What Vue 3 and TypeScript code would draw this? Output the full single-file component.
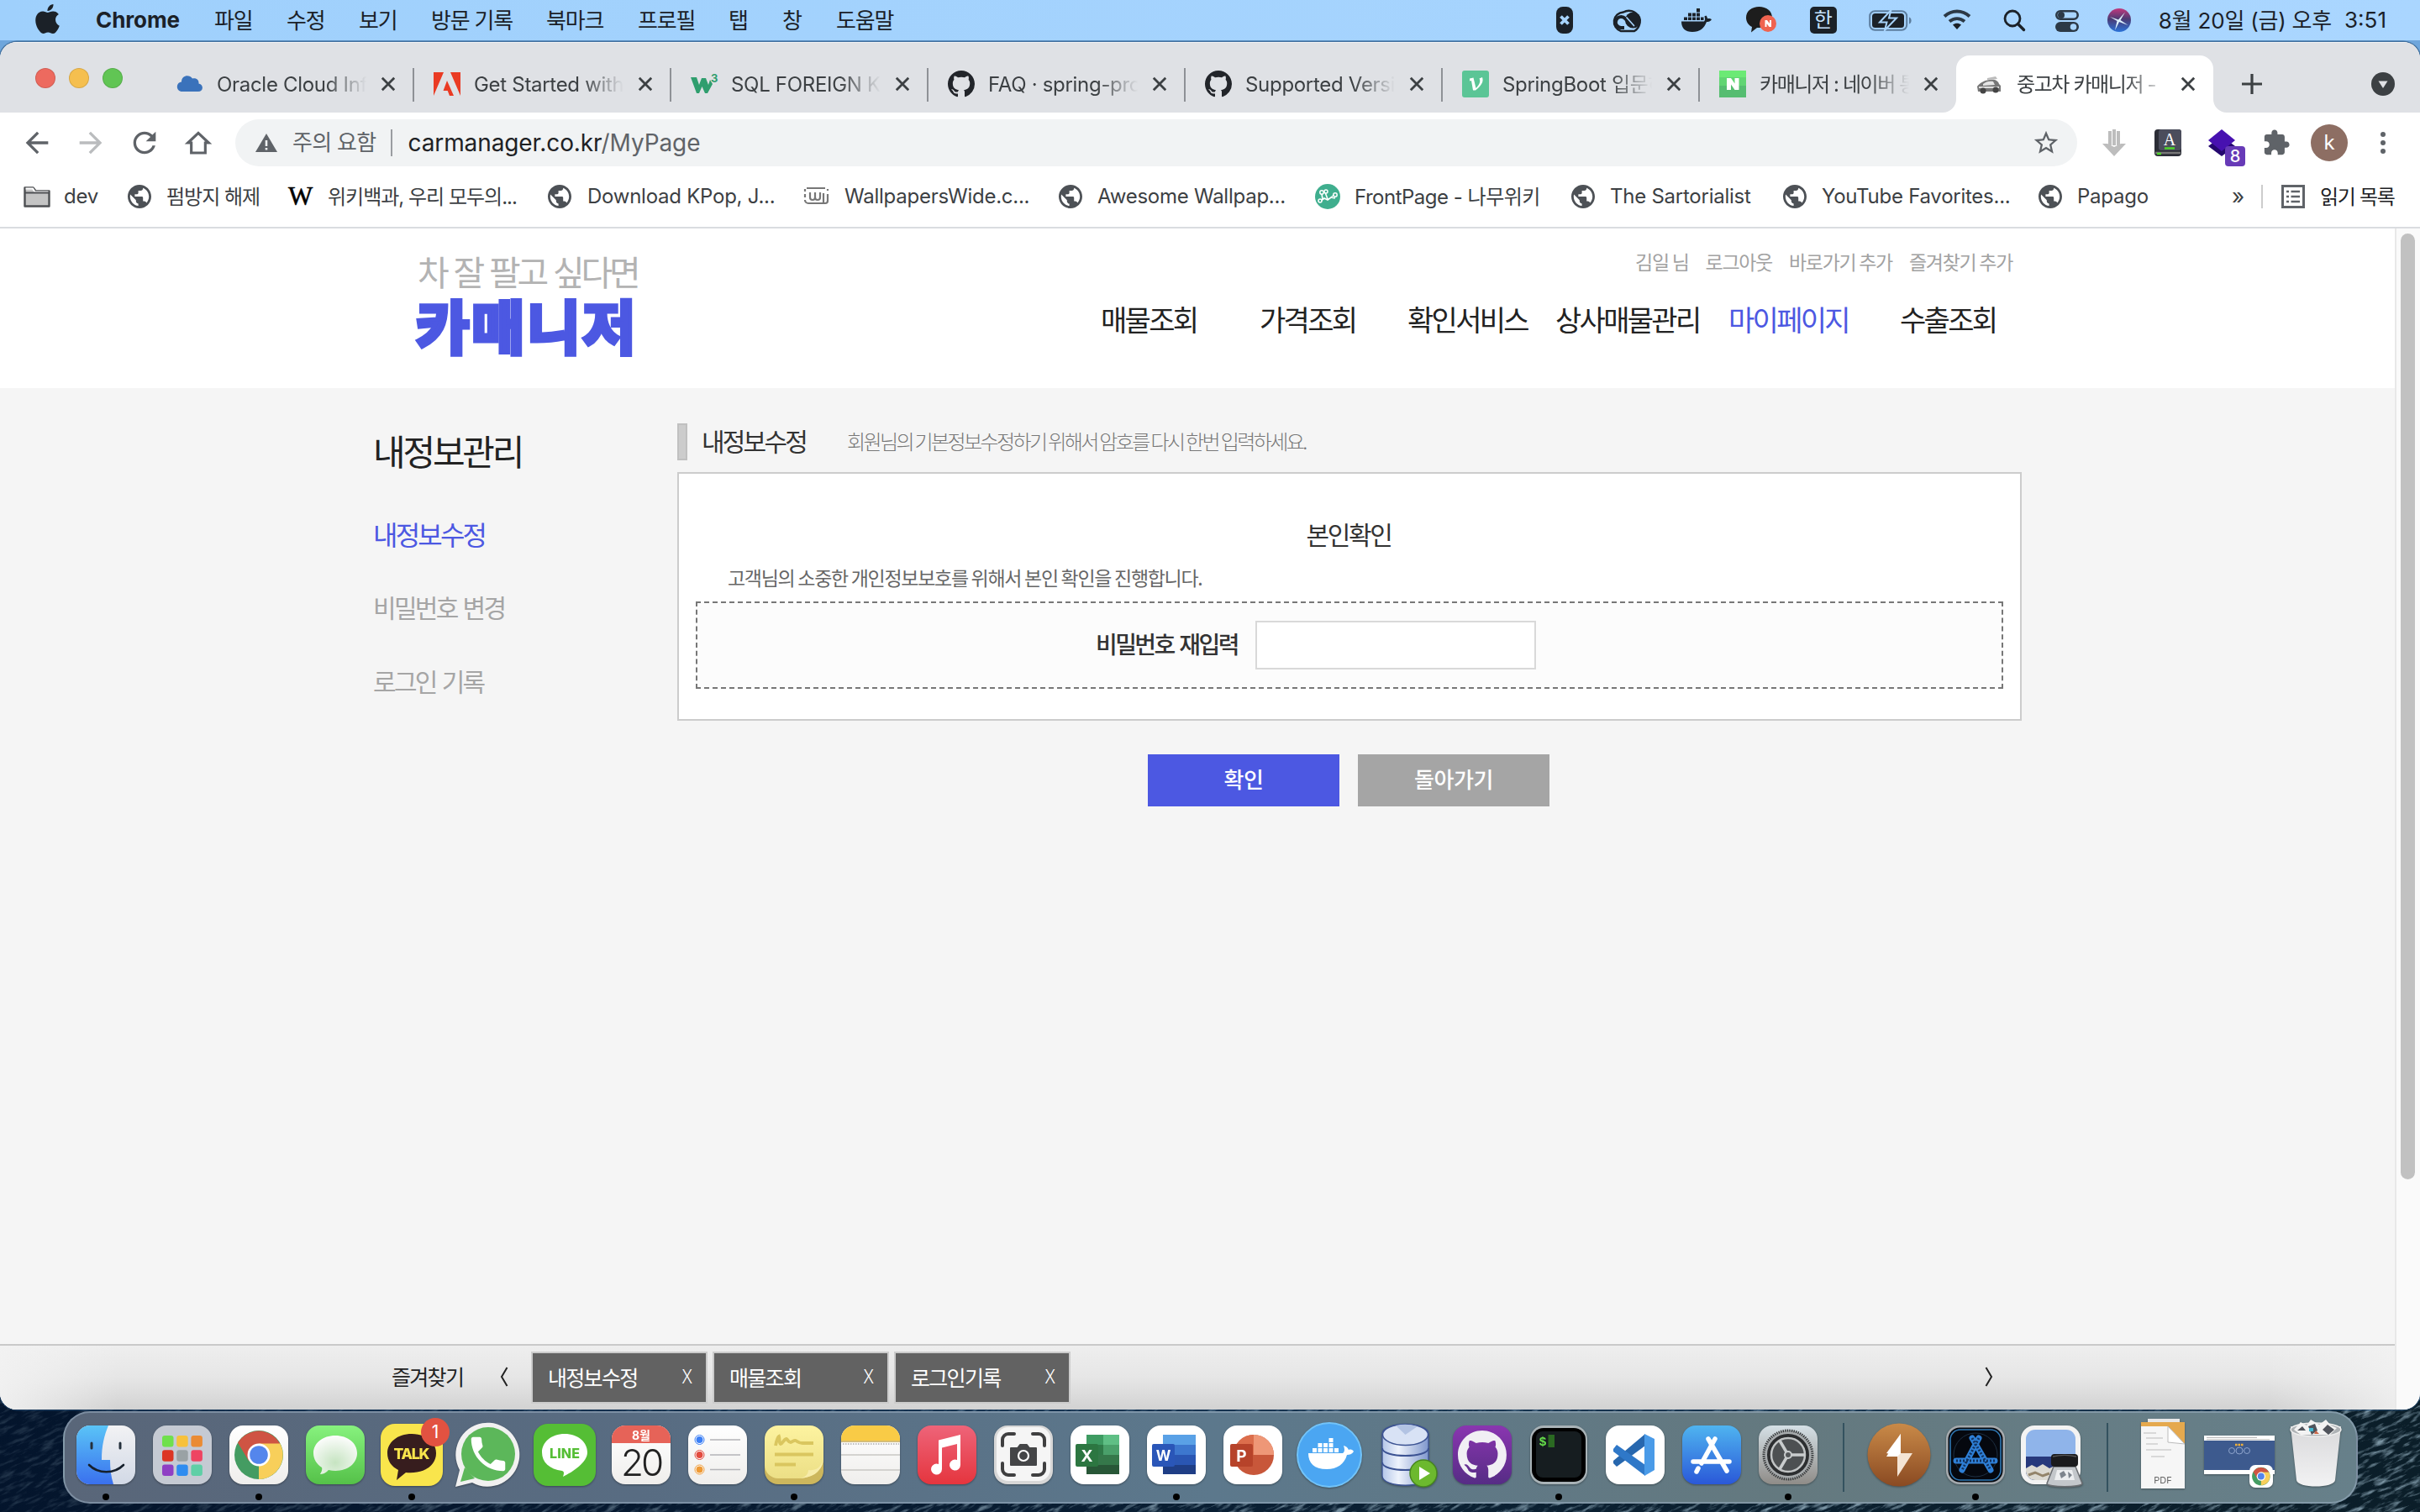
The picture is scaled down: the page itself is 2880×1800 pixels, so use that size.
<script setup lang="ts">
interface Item { label: string; width: number }
interface Tab { title: string; icon: string; active?: boolean }
interface Bookmark { label: string; icon: string; width: number; gap: number }

const menus: Item[] = [
  { label: '파일', width: 86 },
  { label: '수정', width: 86 },
  { label: '보기', width: 86 },
  { label: '방문 기록', width: 137 },
  { label: '북마크', width: 109 },
  { label: '프로필', width: 108 },
  { label: '탭', width: 64 },
  { label: '창', width: 64 },
  { label: '도움말', width: 90 },
]

const tabs: Tab[] = [
  { title: 'Oracle Cloud Infra', icon: 'cloud' },
  { title: 'Get Started with A', icon: 'adobe' },
  { title: 'SQL FOREIGN KEY', icon: 'w3' },
  { title: 'FAQ · spring-project', icon: 'github' },
  { title: 'Supported Versions', icon: 'github' },
  { title: 'SpringBoot 입문하기', icon: 'velog' },
  { title: '카매니저 : 네이버 통합', icon: 'naver' },
  { title: '중고차 카매니저 - ', icon: 'car', active: true },
]

const bookmarks: Bookmark[] = [
  { label: 'dev', icon: 'folder', width: 124, gap: 48 },
  { label: '펌방지 해제', icon: 'globe', width: 191, gap: 46 },
  { label: '위키백과, 우리 모두의...', icon: 'wiki', width: 309, gap: 47 },
  { label: 'Download KPop, J...', icon: 'globe', width: 304, gap: 47 },
  { label: 'WallpapersWide.c...', icon: 'ww', width: 304, gap: 49 },
  { label: 'Awesome Wallpap...', icon: 'globe', width: 305, gap: 46 },
  { label: 'FrontPage - 나무위키', icon: 'namu', width: 305, gap: 47 },
  { label: 'The Sartorialist', icon: 'globe', width: 252, gap: 46 },
  { label: 'YouTube Favorites...', icon: 'globe', width: 304, gap: 46 },
  { label: 'Papago', icon: 'globe', width: 180, gap: 46 },
]

const siteNav: Item[] = [
  { label: '매물조회', width: 189 },
  { label: '가격조회', width: 176 },
  { label: '확인서비스', width: 176 },
  { label: '상사매물관리', width: 206 },
  { label: '마이페이지', width: 204 },
  { label: '수출조회', width: 116 },
]

const dock: string[] = [
  'finder', 'launchpad', 'chrome', 'messages', 'talk', 'whatsapp', 'line', 'calendar', 'reminders',
  'stickies', 'notes', 'music', 'capture', 'excel', 'word', 'ppt', 'docker', 'db', 'github',
  'terminal', 'vscode', 'appstore', 'prefs', 'sep', 'bolt', 'sim', 'preview', 'sep', 'pdf', 'shot', 'trash',
]
const running = new Set(['finder', 'chrome', 'talk', 'stickies', 'word', 'terminal', 'prefs', 'sim'])
const favorites: string[] = ['내정보수정', '매물조회', '로그인기록']

const startsKorean = (s: string): boolean => /^[가-힣]/.test(s)
const hasKorean = (s: string): boolean => /[가-힣]/.test(s)

const launchColors = ['#6fe04c', '#f7c13c', '#ea8b34', '#dc3524', '#9aa2a5', '#ee4462', '#8f3fc4', '#2f8cf0', '#5fcfa6']
const githubPath = 'M8 0C3.58 0 0 3.58 0 8c0 3.54 2.29 6.53 5.47 7.59.4.07.55-.17.55-.38 0-.19-.01-.82-.01-1.49-2.01.37-2.53-.49-2.69-.94-.09-.23-.48-.94-.82-1.13-.28-.15-.68-.52-.01-.53.63-.01 1.08.58 1.23.82.72 1.21 1.87.87 2.33.66.07-.52.28-.87.51-1.07-1.78-.2-3.64-.89-3.64-3.95 0-.87.31-1.59.82-2.15-.08-.2-.36-1.02.08-2.12 0 0 .67-.21 2.2.82.64-.18 1.32-.27 2-.27.68 0 1.36.09 2 .27 1.53-1.04 2.2-.82 2.2-.82.44 1.1.16 1.92.08 2.12.51.56.82 1.27.82 2.15 0 3.07-1.87 3.75-3.65 3.95.29.25.54.73.54 1.48 0 1.07-.01 1.93-.01 2.2 0 .21.15.46.55.38A8.013 8.013 0 0016 8c0-4.42-3.58-8-8-8z'
</script>

<template>
  <div class="desktop">
    <svg class="wallpaper" width="2880" height="140">
      <filter id="waves" x="0" y="0" width="100%" height="100%">
        <feTurbulence type="fractalNoise" baseFrequency="0.05 0.22" numOctaves="4" seed="7" />
        <feColorMatrix type="matrix" values="0 0 0 0 .35  0 0 0 0 .5  0 0 0 0 .6  3.2 0 0 0 -1.55" />
      </filter>
      <linearGradient id="sea"><stop offset="0" stop-color="#061a33" /><stop offset=".5" stop-color="#0a2034" /><stop offset="1" stop-color="#0b1e29" /></linearGradient>
      <linearGradient id="seaFade"><stop offset="0" stop-color="#03132a" stop-opacity=".75" /><stop offset=".6" stop-color="#03132a" stop-opacity="0" /></linearGradient>
      <rect width="2880" height="140" fill="url(#sea)" />
      <g transform="rotate(-25 1440 70)"><rect x="-300" y="-800" width="3500" height="1700" filter="url(#waves)" opacity=".75" /></g>
      <rect width="2880" height="140" fill="url(#seaFade)" />
    </svg>

    <header class="menubar">
      <svg class="apple" viewBox="0 0 24 24"><path fill="#1b2128" d="M12.152 6.896c-.948 0-2.415-1.078-3.96-1.04-2.04.027-3.91 1.183-4.961 3.014-2.117 3.675-.546 9.103 1.519 12.09 1.013 1.454 2.208 3.09 3.792 3.039 1.52-.065 2.09-.987 3.935-.987 1.831 0 2.35.987 3.96.948 1.637-.026 2.676-1.48 3.676-2.948 1.156-1.688 1.636-3.325 1.662-3.415-.039-.013-3.182-1.221-3.22-4.857-.026-3.04 2.48-4.494 2.597-4.559-1.429-2.09-3.623-2.324-4.39-2.376-2-.156-3.675 1.09-4.61 1.09zM15.53 3.83c.843-1.012 1.4-2.427 1.245-3.83-1.207.052-2.662.805-3.532 1.818-.78.896-1.454 2.338-1.273 3.714 1.338.104 2.715-.688 3.559-1.701" /></svg>
      <span class="app-name">Chrome</span>
      <span v-for="m in menus" :key="m.label" class="menu" :style="{ width: m.width + 'px' }">{{ m.label }}</span>
      <div class="status">
        <svg style="width: 20px; margin-right: 46px" viewBox="0 0 20 32"><rect width="20" height="32" rx="8" fill="#1b2128" /><path d="M5.500 11.500l9 9M14.500 11.500l-9 9" stroke="#a8d4fc" stroke-width="3.800" /></svg>
        <svg style="width: 40px; margin-right: 43px" viewBox="0 0 40 32" fill="none" stroke="#1b2128"><path d="M11 29h16A12.500 12.500 0 1 0 14 6.500A11.500 11.500 0 0 0 11 29z" stroke-width="2.400" /><circle cx="25.500" cy="16" r="9.500" fill="#1b2128" stroke="none" /><path d="M15 25h-4a6.500 6.500 0 1 1 5-11l8 9" stroke-width="4" stroke-linejoin="round" /><path d="M18 13l8.500 9.500M13 18l4 4.500" stroke="#a8d4fc" stroke-width="1.700" stroke-linecap="round" /></svg>
        <svg style="width: 36px; margin-right: 41px" viewBox="0 0 36 32" fill="#1b2128"><path d="M0 17.500h27c1-1 1.600-3 .4-6l2-.9c1.200 1.400 1.500 2.600 1.600 3.500 2-.3 4 .2 5 1-1 2.500-3.600 3-6 3C27 26 22 30 13 30 5 30 0 26 0 17.500z" /><path d="M3 12.500h4v3.500H3zM8 12.500h4v3.500H8zM13 12.500h4v3.500h-4zM18 12.500h4v3.500h-4zM23 12.500h3.500v3.500H23zM8 7.500h4v4H8zM13 7.500h4v4h-4zM18 7.500h4v4h-4zM18 2h4v4.500h-4z" /></svg>
        <svg style="width: 36px; margin-right: 40px" viewBox="0 0 36 32"><path d="M15.500 0C7 0 0 5 0 13c0 5 3 9 7 11l-1 6.500 7-5.500C24 26 31 20 31 13 31 5 24 0 15.500 0z" fill="#1d1d1d" /><circle cx="26" cy="20" r="10" fill="#ef6350" /><path d="M22.500 24v-8h2.500l3 4v-4h2v8h-2.500l-3-4v4z" fill="#fff" /></svg>
        <span class="ime">한</span>
        <svg style="width: 52px; margin-right: 36px" viewBox="0 0 52 32"><rect x="1.200" y="5.200" width="44" height="22.500" rx="6" fill="none" stroke="#5c7d9e" stroke-width="2" /><path d="M48 12.500v8c3.500-1 3.500-7 0-8z" fill="#5c7d9e" /><rect x="4" y="8" width="38" height="17" rx="3.500" fill="#1b2128" /><path d="M26.500 4L13 18.500h8.500L19 28l14-14.500h-9z" fill="#1b2128" stroke="#a8d4fc" stroke-width="2" /></svg>
        <svg style="width: 34px; margin-right: 38px" viewBox="0 0 34 32" fill="none" stroke="#2c3946" stroke-width="4"><path d="M2 11.500c9-8 21-8 30 0M8 17.500c5.500-4.500 12.500-4.500 18 0" /><path d="M17 27l-5-5.500c3-2.500 7-2.500 10 0z" fill="#1b2128" stroke="none" /></svg>
        <svg style="width: 26px; margin-right: 36px" viewBox="0 0 26 32" fill="none" stroke="#1b2128" stroke-width="2.800"><circle cx="11" cy="14" r="9" /><path d="M17.500 20.500l7 7" stroke-width="3.400" stroke-linecap="round" /></svg>
        <svg style="width: 28px; margin-right: 34px" viewBox="0 0 28 32"><rect x="1.300" y="5.300" width="25.400" height="9.500" rx="4.700" fill="none" stroke="#2c3946" stroke-width="2.600" /><circle cx="7" cy="10" r="4" fill="#2c3946" /><rect y="18" width="28" height="12" rx="6" fill="#2c3946" /><circle cx="21.500" cy="24" r="3.800" fill="#a8d4fc" /></svg>
        <svg style="width: 28px; margin-right: 33px" viewBox="0 0 28 32"><defs><linearGradient id="siri" x1="0" y1="0" x2="0" y2="1"><stop offset="0" stop-color="#c2387d" /><stop offset=".45" stop-color="#4b3b74" /><stop offset="1" stop-color="#2a72d8" /></linearGradient></defs><circle cx="14" cy="16" r="14" fill="url(#siri)" /><path d="M3 12l10 3.500 8-9-5.500 9.500 9 6-10.500-4-5 10 2.500-11z" fill="#dff4ff" /></svg>
        <span class="date">8월 20일 (금) 오후</span><span class="time">3:51</span>
      </div>
    </header>

    <main class="window">
      <div class="tabstrip">
        <div class="lights"><i class="red" /><i class="yellow" /><i class="green" /></div>
        <div v-for="(t, i) in tabs" :key="t.title" class="tab" :class="{ active: t.active, divided: i < 6 }">
          <svg v-if="t.active" class="ear left" viewBox="0 0 16 16"><path d="M16 0v16H0A16 16 0 0 0 16 0z" fill="#fff" /></svg>
          <svg v-if="t.active" class="ear right" viewBox="0 0 16 16"><path d="M0 0v16h16A16 16 0 0 1 0 0z" fill="#fff" /></svg>
          <svg class="favicon" viewBox="0 0 32 32">
            <path v-if="t.icon === 'cloud'" d="M7 25C-1 25-1 14 6 13.500 6 6 15 4 19 9.500c5-1 8 2 7.500 6C33 17 32 25 26 25z" fill="#3a72bb" />
            <g v-else-if="t.icon === 'adobe'"><path d="M0 2h12L0 30zM20 2h12v28zM16 12l8 18h-5l-2.300-6H11.500z" fill="#ea3b24" /></g>
            <g v-else-if="t.icon === 'w3'" fill="#2f9e6e"><path d="M0 8h7l3 9 3-8h5l3 8 2-6 3 5-6 11h-3l-3.500-8L10 27H7z" /><text x="24" y="14" font-size="13" font-weight="700">3</text></g>
            <path v-else-if="t.icon === 'github'" transform="scale(2)" :d="githubPath" fill="#22252a" />
            <g v-else-if="t.icon === 'velog'"><rect width="32" height="32" rx="3" fill="#5bc596" /><path d="M9 9.500l4.500-1L16.500 21c4-4 6-8 4-11.500L24 8c2 5-1 10-8 15.500h-3L11 12l-2 .5z" fill="#fff" /></g>
            <g v-else-if="t.icon === 'naver'"><rect width="32" height="32" fill="#6bea75" /><rect y="8" width="32" height="24" fill="#4fae70" opacity=".35" /><rect y="18" width="32" height="14" fill="#4fae70" opacity=".6" /><path d="M9 9h5l4.500 6.500V9h5v14h-5L14 16.500V23H9z" fill="#fff" /></g>
            <g v-else><path d="M1 19c3-4 7-7 15-8 6-1 10 1 11 5l2 2v7H2z" fill="#777" /><path d="M8 16c3-3 8-4 12-3l2 4-14 1z" fill="#e4e4e4" /><path d="M3 20h24" stroke="#ddd" stroke-width="2" /><circle cx="8" cy="24" r="3.500" fill="#444" /><circle cx="23" cy="23" r="3.500" fill="#444" /><path d="M13 9l10-2 2 3-12 1z" fill="#bbb" /></g>
          </svg>
          <span class="tab-title" :class="{ ko: startsKorean(t.title), mixed: t.icon === 'velog' }">{{ t.title }}</span>
          <svg class="close" viewBox="0 0 16 16"><path d="M.8 .8l14.400 14.400M15.200 .8L.8 15.200" stroke="#3c4043" stroke-width="2.800" /></svg>
        </div>
        <svg class="plus" viewBox="0 0 24 24"><path d="M12 0v24M0 12h24" stroke="#3c4043" stroke-width="3.200" /></svg>
        <svg class="search-tabs" viewBox="0 0 28 28"><circle cx="14" cy="14" r="14" fill="#3c4043" /><path d="M8.500 10.500h11L14 19z" fill="#e0e1e5" /></svg>
      </div>

      <div class="toolbar">
        <svg class="nav" viewBox="0 0 24 24" fill="#5f6368"><path d="M20 11H7.830l5.590-5.590L12 4l-8 8 8 8 1.410-1.410L7.830 13H20v-2z" /></svg>
        <svg class="nav" viewBox="0 0 24 24" fill="#babcbe"><path d="M12 4l-1.410 1.410L16.170 11H4v2h12.170l-5.580 5.590L12 20l8-8z" /></svg>
        <svg class="nav" viewBox="0 0 24 24" fill="#5f6368"><path d="M17.650 6.350C16.200 4.900 14.210 4 12 4c-4.420 0-7.990 3.580-7.990 8s3.570 8 7.990 8c3.730 0 6.840-2.550 7.730-6h-2.080c-.82 2.330-3.040 4-5.650 4-3.310 0-6-2.690-6-6s2.690-6 6-6c1.660 0 3.140.69 4.220 1.780L13 11h7V4l-2.350 2.350z" /></svg>
        <svg class="nav" viewBox="0 0 24 24" fill="none" stroke="#5f6368" stroke-width="1.900"><path d="M4.600 12H7v7.200h10V12h2.400L12 5z" stroke-linejoin="miter" /></svg>
        <div class="omnibox">
          <svg class="warn" viewBox="0 0 26 22"><path d="M13 0l13 22H0z" fill="#5f6368" /><path d="M13 8v7M13 17v2.600" stroke="#f1f3f4" stroke-width="2.600" /></svg>
          <span class="unsafe">주의 요함</span>
          <span class="url">carmanager.co.kr<em>/MyPage</em></span>
          <svg class="star" viewBox="0 0 24 24" fill="#5f6368"><path d="M22 9.240l-7.190-.62L12 2 9.190 8.630 2 9.240l5.460 4.730L5.820 21 12 17.270 18.180 21l-1.630-7.030L22 9.240zM12 15.400l-3.760 2.270 1-4.280-3.320-2.880 4.380-.38L12 6.100l1.710 4.040 4.380.38-3.320 2.880 1 4.280L12 15.400z" /></svg>
        </div>
        <div class="extensions">
          <svg width="28" height="32" viewBox="0 0 28 32" style="margin-right: 34px" fill="#bdbdbd"><path d="M7 2h4v17H7zM12 0h4v19h-4zM17 2h4v17h-4zM0 17h6l8 4 8-4h6L14 32z" /></svg>
          <svg width="32" height="32" viewBox="0 0 32 32" style="margin-right: 32px"><rect width="32" height="32" rx="4" fill="#2b2d36" /><rect x="5" width="27" height="25" rx="3" fill="#4b4d5c" /><path d="M1 28h30" stroke="#777" stroke-width="2.500" /><text x="18" y="19" text-anchor="middle" font-size="20" font-family="Liberation Serif, serif" fill="#fff">A</text><path d="M12 22.500h12M3 29h5" stroke="#4fd42a" stroke-width="2.500" /></svg>
          <span class="layers"><svg width="32" height="32" viewBox="0 0 32 32"><path d="M16 8l16 12-16 12L0 20z" fill="#25086f" /><path d="M16 0l16 13-16 13L0 13z" fill="#4711b0" /></svg><b>8</b></span>
          <svg width="34" height="34" viewBox="0 0 24 24" style="margin-right: 24px" fill="#5f6368"><path d="M20.500 11H19V7c0-1.100-.9-2-2-2h-4V3.500C13 2.120 11.880 1 10.500 1S8 2.120 8 3.500V5H4c-1.100 0-1.990.9-1.990 2v3.800H3.500c1.490 0 2.700 1.210 2.700 2.700s-1.210 2.700-2.700 2.700H2V20c0 1.100.9 2 2 2h3.800v-1.500c0-1.490 1.210-2.700 2.700-2.700 1.490 0 2.700 1.210 2.700 2.700V22H17c1.100 0 2-.9 2-2v-4h1.500c1.380 0 2.500-1.120 2.500-2.500S21.880 11 20.500 11z" /></svg>
          <span class="avatar">k</span>
          <svg width="6" height="28" viewBox="0 0 6 28" fill="#5f6368"><circle cx="3" cy="4" r="3" /><circle cx="3" cy="14" r="3" /><circle cx="3" cy="24" r="3" /></svg>
        </div>
      </div>

      <div class="bookmarks">
        <div v-for="b in bookmarks" :key="b.label" class="bookmark" :style="{ width: b.width + 'px' }">
          <span class="bm-icon" :style="{ width: b.gap + 'px' }">
            <svg v-if="b.icon === 'folder'" width="32" height="28" viewBox="0 0 32 28"><path d="M1.500 25.500v-22h10l3 4h16v18z" fill="#c4c4c4" stroke="#4d4f52" stroke-width="2.400" stroke-linejoin="round" /><path d="M2.500 4.500h8.500l2.500 4h16" fill="none" stroke="#fff" stroke-width="2" /><path d="M1.500 9.500h29" stroke="#4d4f52" stroke-width="1.800" /></svg>
            <svg v-else-if="b.icon === 'globe'" width="28" height="28" viewBox="2 2 20 20"><path fill="#4d5156" d="M12 2C6.480 2 2 6.480 2 12s4.480 10 10 10 10-4.480 10-10S17.520 2 12 2zm-1 17.930c-3.950-.49-7-3.850-7-7.930 0-.62.080-1.210.210-1.790L9 15v1c0 1.100.9 2 2 2v1.930zm6.900-2.540c-.26-.81-1-1.390-1.900-1.390h-1v-3c0-.55-.45-1-1-1H8v-2h2c.55 0 1-.45 1-1V7h2c1.100 0 2-.9 2-2v-.41c2.930 1.190 5 4.060 5 7.410 0 2.080-.8 3.970-2.100 5.390z" /></svg>
            <b v-else-if="b.icon === 'wiki'" class="wiki">W</b>
            <svg v-else-if="b.icon === 'ww'" width="32" height="24" viewBox="0 0 32 24" fill="none" stroke="#777" stroke-width="2.200"><path d="M4 2h22M29 3v2M29 9v8a3 3 0 0 1-3 3H6a4 4 0 0 1-4-4M2 13V9M2 6V3M8 7v6a3 3 0 0 0 6 0V7v6a3 3 0 0 0 6 0V7M24 8v12" /></svg>
            <svg v-else width="30" height="30" viewBox="0 0 30 30"><circle cx="15" cy="15" r="15" fill="#3fae8e" /><path d="M7 20l4-3 4 2 4-3 5 1M9 18l-1-6M15 18l-3-8M19 16l5-4" fill="none" stroke="#fff" stroke-width="1.600" /><g fill="#3fae8e" stroke="#fff" stroke-width="1.500"><circle cx="8" cy="10" r="2.200" /><circle cx="13" cy="9" r="2" /><circle cx="24" cy="13" r="2.200" /><circle cx="6" cy="20" r="2" /></g></svg>
          </span>
          <span :class="{ ko: startsKorean(b.label), mixed: !startsKorean(b.label) && hasKorean(b.label) }">{{ b.label }}</span>
        </div>
        <span class="more">»</span>
        <svg class="list-icon" width="28" height="28" viewBox="0 0 28 28" fill="none" stroke="#5f6368"><rect x="1.500" y="1.500" width="25" height="25" stroke-width="3" /><path d="M6 8h3M6 14h3M6 20h3M11.500 8H22M11.500 14H22M11.500 20H22" stroke-width="2.600" /></svg>
        <span class="ko reading">읽기 목록</span>
      </div>

      <div class="viewport">
        <div class="page">
          <div class="site-header">
            <div class="logo"><span class="slogan">차 잘 팔고 싶다면</span><strong>카매니저</strong></div>
            <div class="header-right">
              <div class="util"><span>김일 님</span><span>로그아웃</span><span>바로가기 추가</span><span>즐겨찾기 추가</span></div>
              <nav class="site-nav"><span v-for="n in siteNav" :key="n.label" :class="{ on: n.label === '마이페이지' }" :style="{ width: n.width + 'px' }">{{ n.label }}</span></nav>
            </div>
          </div>
          <div class="site-body">
            <aside><h2>내정보관리</h2><p class="on">내정보수정</p><p>비밀번호 변경</p><p>로그인 기록</p></aside>
            <section>
              <div class="heading"><i /><h3>내정보수정</h3><span>회원님의 기본정보수정하기 위해서 암호를 다시 한번 입력하세요.</span></div>
              <div class="panel">
                <h4>본인확인</h4>
                <p>고객님의 소중한 개인정보보호를 위해서 본인 확인을 진행합니다.</p>
                <div class="field"><label for="pw">비밀번호 재입력</label><input id="pw" type="password"></div>
              </div>
              <div class="actions"><button class="primary">확인</button><button>돌아가기</button></div>
            </section>
          </div>
          <footer>
            <span class="fav">즐겨찾기</span>
            <svg class="chev" viewBox="0 0 10 24"><path d="M8.500 1L2 12l6.500 11" fill="none" stroke="#222" stroke-width="2" /></svg>
            <div v-for="f in favorites" :key="f" class="fav-tab"><span>{{ f }}</span><i>X</i></div>
            <svg class="chev next" viewBox="0 0 10 24"><path d="M1.500 1L8 12 1.500 23" fill="none" stroke="#222" stroke-width="2" /></svg>
          </footer>
        </div>
        <div class="scroll"><i /></div>
      </div>
    </main>

    <div class="dock">
      <svg width="0" height="0" class="defs"><defs>
        <linearGradient id="gBlue" x1="0" y1="0" x2="0" y2="1"><stop offset="0" stop-color="#5ac4f7" /><stop offset="1" stop-color="#3a70ee" /></linearGradient>
        <linearGradient id="gFace" x1="0" y1="0" x2="0" y2="1"><stop offset="0" stop-color="#f2f2f4" /><stop offset="1" stop-color="#d2d9e6" /></linearGradient>
        <linearGradient id="gWhite" x1="0" y1="0" x2="0" y2="1"><stop offset="0" stop-color="#fff" /><stop offset="1" stop-color="#efeeec" /></linearGradient>
        <linearGradient id="gMsg" x1="0" y1="0" x2="0" y2="1"><stop offset="0" stop-color="#87f27e" /><stop offset="1" stop-color="#55c149" /></linearGradient>
        <radialGradient id="gBubble" cx=".5" cy=".7" r=".7"><stop offset="0" stop-color="#c6e4c1" /><stop offset="1" stop-color="#fdfdfd" /></radialGradient>
        <linearGradient id="gMusic" x1="0" y1="0" x2="0" y2="1"><stop offset="0" stop-color="#ee6479" /><stop offset="1" stop-color="#e5353e" /></linearGradient>
        <linearGradient id="gSticky" x1="0" y1="0" x2="0" y2="1"><stop offset="0" stop-color="#fdf3a0" /><stop offset="1" stop-color="#ecdf86" /></linearGradient>
        <linearGradient id="gCyl"><stop offset="0" stop-color="#b4c6e8" /><stop offset=".35" stop-color="#eef3fc" /><stop offset="1" stop-color="#7f97cd" /></linearGradient>
        <linearGradient id="gGit" x1="0" y1="0" x2="0" y2="1"><stop offset="0" stop-color="#8a36b0" /><stop offset="1" stop-color="#562c85" /></linearGradient>
        <linearGradient id="gStore" x1="0" y1="0" x2="0" y2="1"><stop offset="0" stop-color="#4fb4f0" /><stop offset="1" stop-color="#2a58d8" /></linearGradient>
        <linearGradient id="gGray" x1="0" y1="0" x2="0" y2="1"><stop offset="0" stop-color="#d5e0e6" /><stop offset="1" stop-color="#8f8c88" /></linearGradient>
        <linearGradient id="gBolt" x1="0" y1="0" x2="0" y2="1"><stop offset="0" stop-color="#c98a48" /><stop offset="1" stop-color="#8a4a22" /></linearGradient>
        <linearGradient id="gTrash" x1="0" y1="0" x2="0" y2="1"><stop offset="0" stop-color="#d9d9db" /><stop offset="1" stop-color="#f2f2f3" /></linearGradient>
      </defs></svg>
      <div v-for="(d, i) in dock" :key="i" class="slot" :class="{ sep: d === 'sep' }">
        <svg v-if="d !== 'sep'" viewBox="0 0 84 84">
          <g v-if="d === 'finder'"><rect x="7" y="7" width="70" height="70" rx="16" fill="url(#gFace)" /><path d="M23 7h22c-5 12-8 24-8 41h10c0 10 1 20 4 29H23A16 16 0 0 1 7 61V23A16 16 0 0 1 23 7z" fill="url(#gBlue)" /><path d="M25 28v6M59 28v6" stroke="#24303c" stroke-width="3" stroke-linecap="round" /><path d="M22 54c11 11 30 11 41 0" fill="none" stroke="#16202c" stroke-width="2.600" stroke-linecap="round" /></g>
          <g v-else-if="d === 'launchpad'"><rect x="7" y="7" width="70" height="70" rx="16" fill="#c5cad3" /><rect v-for="(c, k) in launchColors" :key="k" :x="18 + (k % 3) * 17.200" :y="19 + Math.floor(k / 3) * 17.200" width="13.500" height="13.500" rx="3" :fill="c" /></g>
          <g v-else-if="d === 'chrome'"><rect x="7" y="7" width="70" height="70" rx="16" fill="url(#gWhite)" /><circle cx="42" cy="42" r="29" fill="#449c62" /><path d="M42 42L42 28H67.100A29 29 0 0 1 42 71z" fill="#f8cf5a" /><path d="M17 27.500A29 29 0 0 1 67.100 28.500H42L29.900 49z" fill="#cf5443" /><circle cx="42" cy="42" r="13.500" fill="#fff" /><circle cx="42" cy="42" r="10.800" fill="#5486ec" /></g>
          <g v-else-if="d === 'messages'"><rect x="7" y="7" width="70" height="70" rx="16" fill="url(#gMsg)" /><path d="M42 19c-15 0-26 9-26 21 0 7 4 13 10 17 1 3-1 6-2 8 5 0 8-3 10-5 19 4 34-6 34-20 0-12-11-21-26-21z" fill="url(#gBubble)" /></g>
          <g v-else-if="d === 'talk'"><rect x="5" y="5" width="74" height="74" rx="17" fill="#f9e54c" /><path d="M42 17c-17 0-29 10-29 23 0 9 5 16 13 20l-2 12 11-9c21 2 36-8 36-23 0-13-12-23-29-23z" fill="#371d1e" /><text x="42" y="47" text-anchor="middle" font-size="17.500" font-weight="800" fill="#f9e54c" textLength="43">TALK</text></g>
          <g v-else-if="d === 'whatsapp'"><path d="M3 80l5-20A38 38 0 1 1 23 75z" fill="#f1f1f1" /><circle cx="42" cy="41" r="32" fill="#5cb75a" /><path d="M9 74l5-17 12 13z" fill="#5cb75a" /><path transform="translate(15 14) scale(2.250)" d="M6.620 10.790c1.440 2.830 3.760 5.140 6.590 6.590l2.200-2.200c.27-.27.67-.36 1.020-.24 1.120.37 2.330.57 3.570.57.55 0 1 .45 1 1V20c0 .55-.45 1-1 1-9.390 0-17-7.610-17-17 0-.55.45-1 1-1h3.500c.55 0 1 .45 1 1 0 1.250.2 2.450.57 3.570.11.35.030.74-.25 1.020l-2.200 2.200z" fill="#fff" /></g>
          <g v-else-if="d === 'line'"><rect x="5" y="5" width="74" height="74" rx="17" fill="#55be35" /><path d="M42 17c-16 0-27 10-27 22 0 12 9 20 24 22 3 1 2 4 1 7 12-6 29-17 29-29 0-12-11-22-27-22z" fill="#fff" /><text x="42" y="45.500" text-anchor="middle" font-size="16" font-weight="800" fill="#55be35" textLength="36">LINE</text></g>
          <g v-else-if="d === 'calendar'"><rect x="7" y="7" width="70" height="70" rx="16" fill="url(#gWhite)" /><path d="M7 28v-5A16 16 0 0 1 23 7h38a16 16 0 0 1 16 16v5z" fill="#e66358" /><text x="42" y="23.500" text-anchor="middle" font-size="14" font-weight="700" fill="#fff">8월</text><text x="42" y="66.500" text-anchor="middle" font-size="44" font-weight="300" letter-spacing="-3" fill="#222">20</text></g>
          <g v-else-if="d === 'reminders'"><rect x="7" y="7" width="70" height="70" rx="16" fill="url(#gWhite)" /><path d="M33 24h36M33 42h36M33 59.500h36" stroke="#b4b4b8" stroke-width="1.600" /><circle cx="20.500" cy="24" r="5.500" fill="#fff" stroke="#3b7ff5" /><circle cx="20.500" cy="24" r="4" fill="#3b7ff5" /><circle cx="20.500" cy="42" r="5.500" fill="#fff" stroke="#e24b3f" /><circle cx="20.500" cy="42" r="4" fill="#e24b3f" /><circle cx="20.500" cy="59.500" r="5.500" fill="#fff" stroke="#ee9a36" /><circle cx="20.500" cy="59.500" r="4" fill="#ee9a36" /></g>
          <g v-else-if="d === 'stickies'"><rect x="7" y="10" width="70" height="67" rx="16" fill="#cdb75d" /><path d="M23 7h38a16 16 0 0 1 16 16v25c-3 14-13 21-28 22H23A16 16 0 0 1 7 54V23A16 16 0 0 1 23 7z" fill="url(#gSticky)" /><path d="M77 48c-4 10-10 13-18 12 0 6-5 9-10 10 15-1 26-8 28-22z" fill="#f7ecaa" /><path d="M20 31c1-5 2-10 4-11 1 3 0 8 2 9 3-1 4-6 7-6 2 1 2 4 5 4 3-1 4-3 6-2 3 2 5 3 8 3h13M19 41.500h46M19 53.500h25" fill="none" stroke="#dac65f" stroke-width="3.800" /></g>
          <g v-else-if="d === 'notes'"><rect x="7" y="7" width="70" height="70" rx="16" fill="url(#gWhite)" /><path d="M7 25v-2A16 16 0 0 1 23 7h38a16 16 0 0 1 16 16v2z" fill="#f9cb46" /><path d="M7 26h70" stroke="#c9a94c" stroke-width="1.500" /><path d="M9 29h67" stroke="#aaa" stroke-width="1.500" stroke-dasharray="1.500 1.500" /><path d="M7 42h70M7 60h70" stroke="#c9c7c3" stroke-width="1.300" /></g>
          <g v-else-if="d === 'music'"><rect x="7" y="7" width="70" height="70" rx="16" fill="url(#gMusic)" /><path d="M32 24.500L58 18v36a6.500 6.500 0 1 1-4-6V29l-18 4.500V59a6.500 6.500 0 1 1-4-6z" fill="#fff" /></g>
          <g v-else-if="d === 'capture'"><rect x="7" y="7" width="70" height="70" rx="16" fill="#d7d7d7" /><rect x="10" y="9" width="64" height="64" rx="14" fill="#f5f5f5" /><path d="M17 31v-7a7 7 0 0 1 7-7h7M53 17h7a7 7 0 0 1 7 7v7M67 52v7a7 7 0 0 1-7 7h-7M31 66h-7a7 7 0 0 1-7-7v-7" fill="none" stroke="#3f3f40" stroke-width="4" stroke-linecap="round" /><path d="M27 34h8l3-4h8l3 4h8v20H27z" fill="#444547" stroke="#444547" stroke-width="2" stroke-linejoin="round" /><circle cx="42" cy="43" r="6" fill="#444547" stroke="#fff" stroke-width="2.200" /></g>
          <g v-else-if="d === 'excel'"><rect x="7" y="7" width="70" height="70" rx="16" fill="#fff" /><path d="M26 18h20v12H26z" fill="#3e9b62" /><path d="M46 18h19v12H46z" fill="#5fbf85" /><path d="M26 30h20v12H26z" fill="#2f7a48" /><path d="M46 30h19v12H46z" fill="#4aa06a" /><path d="M26 42h39v12H26z" fill="#35784a" /><path d="M26 54h39v11H26z" fill="#285737" /><rect x="13" y="29" width="27" height="27" rx="2" fill="#2c7641" /><text x="26.500" y="49.500" text-anchor="middle" font-size="19" font-weight="700" fill="#fff">X</text></g>
          <g v-else-if="d === 'word'"><rect x="7" y="7" width="70" height="70" rx="16" fill="#fff" /><path d="M26 18h39v12H26z" fill="#5aa1e6" /><path d="M26 30h39v12H26z" fill="#3d77ce" /><path d="M26 42h39v12H26z" fill="#2a56b3" /><path d="M26 54h39v11H26z" fill="#1f3e86" /><rect x="13" y="29" width="27" height="27" rx="2" fill="#2a56b8" /><text x="26.500" y="49" text-anchor="middle" font-size="17" font-weight="700" fill="#fff">W</text></g>
          <g v-else-if="d === 'ppt'"><rect x="7" y="7" width="70" height="70" rx="16" fill="#fff" /><circle cx="43" cy="42" r="24" fill="#c8573a" /><path d="M43 18a24 24 0 0 1 24 24H43z" fill="#ee9777" /><path d="M43 18a24 24 0 0 0-24 24h24z" fill="#dc6e4c" /><rect x="15" y="29" width="27" height="27" rx="2" fill="#b7432a" /><text x="28.500" y="49.500" text-anchor="middle" font-size="19" font-weight="700" fill="#fff">P</text></g>
          <g v-else-if="d === 'docker'"><circle cx="42" cy="42" r="38" fill="#4ba6f2" stroke="#72c3f8" stroke-width="2" /><path d="M17 40h41c3-2 2-6 1-9 4 1 5 3 6 5 3-1 5 0 6 2-2 3-5 4-8 4-3 11-12 17-24 17-15 0-22-7-22-19z" fill="#fff" /><path d="M22 34h5v5h-5zM28.500 34h5v5h-5zM35 34h5v5h-5zM41.500 34h5v5h-5zM48 34h5v5h-5zM28.500 28h5v5h-5zM35 28h5v5h-5zM41.500 28h5v5h-5zM41.500 22h5v5h-5z" fill="#fff" /></g>
          <g v-else-if="d === 'db'"><path d="M14 17c0-15 55-15 55 0v50c0 15-55 15-55 0z" fill="url(#gCyl)" stroke="#3c5393" stroke-width="1.300" /><path d="M14 34c0 12 55 12 55 0M14 51c0 12 55 12 55 0" fill="none" stroke="#3c5393" stroke-width="2" /><ellipse cx="41.500" cy="18" rx="27" ry="12.500" fill="#d8e2f5" stroke="#3c5393" stroke-width="1.500" /><path d="M41.500 18L30 7a27 12 0 0 1 26 1z" fill="#b2c3e3" /><circle cx="63" cy="64" r="16" fill="#6cb92e" stroke="#47861f" stroke-width="1.500" /><path d="M58 56l13 8-13 8z" fill="#fff" /></g>
          <g v-else-if="d === 'github'"><rect x="7" y="7" width="70" height="70" rx="16" fill="url(#gGit)" /><path transform="translate(13 13) scale(3.620)" :d="githubPath" fill="#f1eff4" /></g>
          <g v-else-if="d === 'terminal'"><rect x="8" y="7" width="68" height="70" rx="16" fill="#a9b3b7" /><rect x="10" y="10" width="64" height="64" rx="14" fill="#000" /><rect x="15" y="14" width="54" height="55" rx="8" fill="#161d20" /><text x="18.500" y="31" font-size="15" font-family="Liberation Mono, monospace" font-weight="700" fill="#67e04b">$</text><path d="M29.500 18h7.500v15h-7.500z" fill="#2b6a22" /></g>
          <g v-else-if="d === 'vscode'"><rect x="7" y="7" width="70" height="70" rx="16" fill="#fff" /><path d="M54 17v14L20 56l-4-4v-3z" fill="#2767ae" /><path d="M16 35l4-5 34 24v13L16 38z" fill="#2f78c8" /><path d="M53 17l12 6v37l-12 7z" fill="#4a9be8" /></g>
          <g v-else-if="d === 'appstore'"><rect x="7" y="7" width="70" height="70" rx="16" fill="url(#gStore)" /><path d="M46 23L30 52M38 23l22 38M20 50h43M26 58l-2 4" fill="none" stroke="#fff" stroke-width="5.500" stroke-linecap="round" /></g>
          <g v-else-if="d === 'prefs'"><rect x="7" y="7" width="70" height="70" rx="16" fill="url(#gGray)" /><circle cx="42" cy="42" r="29" fill="#a6aaac" stroke="#35383a" stroke-width="3" stroke-dasharray="1.400 1.200" /><circle cx="42" cy="42" r="23" fill="#4d5052" stroke="#2c2e30" stroke-width="4" /><circle cx="42" cy="42" r="20" fill="none" stroke="#c0c3c4" stroke-width="2.500" /><path d="M42 42h20M42 42L32 25M42 42L32 59" stroke="#c9cccd" stroke-width="3.500" /><circle cx="42" cy="42" r="4" fill="#55585a" stroke="#c9cccd" stroke-width="2" /></g>
          <g v-else-if="d === 'bolt'"><circle cx="42" cy="42" r="37.500" fill="url(#gBolt)" /><path d="M44 17v23H27z" fill="#fff" /><path d="M27 40h31L40 68V44z" fill="#f4e4d4" /><path d="M44 17v23l-4 4H27z" fill="#fff" /></g>
          <g v-else-if="d === 'sim'"><rect x="7" y="7" width="70" height="70" rx="16" fill="#a5aaae" /><rect x="9.500" y="9.500" width="65" height="65" rx="14" fill="#05080f" /><rect x="12" y="12" width="60" height="60" rx="12" fill="none" stroke="#2f78b4" stroke-width="1.600" /><circle cx="42" cy="42" r="26" fill="none" stroke="#1d2f42" /><path d="M46 22L26 60M38 22l22 38M19 49h46" stroke="#2e7fd6" stroke-width="7" stroke-linecap="round" /><path d="M46 22L26 60M38 22l22 38M19 49h46" stroke="#12335f" stroke-width="3" stroke-dasharray="2 2" /></g>
          <g v-else-if="d === 'preview'"><rect x="5" y="7" width="71" height="70" rx="16" fill="#f3f3f3" /><rect x="11" y="12" width="59" height="60" rx="11" fill="#8fb4ea" /><path d="M11 44h59v17a11 11 0 0 1-11 11H22a11 11 0 0 1-11-11z" fill="#27397c" /><path d="M11 58l7-4 6 3 7-4 8 5 6-3v17H22a11 11 0 0 1-11-11z" fill="#dcdad2" /><path d="M14 66l8-3 9 4 8-3" fill="none" stroke="#93846a" stroke-width="3" /><path d="M44 56h26l8 20c0 5-42 5-42 0z" fill="#c3c7cb" stroke="#6b6e72" stroke-width="1.500" /><path d="M48 60h18l3 12H45z" fill="#eceef0" /><path d="M51 64l5-3 3 5-6 4zM61 62l5 4-4 4z" fill="#7e858e" /><rect x="41" y="41" width="32" height="15" rx="4" fill="#1a1a1c" /><path d="M43 44c8-2 20-2 28 0" stroke="#555" stroke-width="1.500" fill="none" /></g>
          <g v-else-if="d === 'pdf'"><path d="M24 -1h38v6H24z" fill="#e8e8e8" /><path d="M16 3h52v79H16z" fill="#e5a94e" /><path d="M16 8h32l20 21v53H16z" fill="#f6f6f6" /><path d="M48 8l20 21-20-2z" fill="#fff" stroke="#bbb" /><path d="M19 16h15M22 22h20M22 29h14M22 36h30M28 44h16" stroke="#bbb" /><text x="42" y="76" text-anchor="middle" font-size="11" fill="#666">PDF</text></g>
          <g v-else-if="d === 'shot'"><path d="M0 19h84v46H0z" fill="#fff" /><path d="M0 25h84v35H0z" fill="#3d5a8e" /><path d="M3 21.500h60M3 23.800h75" stroke="#aaa" stroke-width=".8" /><g fill="none" stroke="#8ea4cc"><circle cx="33" cy="37" r="3.500" /><circle cx="42" cy="37" r="4" /><circle cx="51" cy="37" r="3.500" /></g><path d="M37 30h10" stroke="#f0b03a" stroke-width="2.500" stroke-dasharray="2.500 1" /><rect x="54" y="54" width="28" height="27" rx="7" fill="#fff" /><g transform="translate(52.300 52) scale(.37)"><circle cx="42" cy="42" r="29" fill="#449c62" /><path d="M42 42L42 28H67.100A29 29 0 0 1 42 71z" fill="#f8cf5a" /><path d="M17 27.500A29 29 0 0 1 67.100 28.500H42L29.900 49z" fill="#cf5443" /><circle cx="42" cy="42" r="14" fill="#fff" /><circle cx="42" cy="42" r="10.800" fill="#5486ec" /></g></g>
          <g v-else><path d="M12 8l7 64c1 10 45 10 46 0l7-64z" fill="url(#gTrash)" /><ellipse cx="42" cy="12" rx="30" ry="8" fill="#aeb2b5" stroke="#eee" stroke-width="1.500" /><path d="M16 12l8-9 7 4 5-7 10 6 8-6 6 7 7 3-8 8H24z" fill="#f3f3f3" /><path d="M20 13l6-5 4 5zM33 8l8-3 3 8-7 5zM50 12l6-6 8 6-7 6z" fill="#50545c" /><path d="M34 10h5v4h-5z" fill="#42b6cf" /><path d="M42 13l4 4h-6z" fill="#c96547" /></g>
        </svg>
        <b v-if="d === 'talk'" class="badge">1</b>
        <i v-if="running.has(d)" class="dot" />
      </div>
    </div>
  </div>
</template>

<style>
body { margin: 0; }
</style>

<style scoped>
.desktop { position: relative; width: 2880px; height: 1800px; overflow: hidden; background: #6ea6dc; font-family: Inter, "Noto Sans CJK KR", sans-serif; color: #1b2128; }
.desktop svg { flex: none; overflow: visible; }
.desktop svg.wallpaper { position: absolute; left: 0; top: 1660px; overflow: hidden; }
.menubar { display: flex; align-items: center; height: 48px; padding-right: 40px; background: linear-gradient(90deg, #9fd0fc, #aad6ff); font-size: 26px; white-space: nowrap; }
.apple { width: 35px; height: 35px; margin-left: 39px; margin-bottom: 4px; }
.app-name { width: 141px; margin-left: 40px; padding-bottom: 1px; font-weight: 700; letter-spacing: -0.1px; }
.menu { flex: none; padding-bottom: 3px; letter-spacing: -1.200px; }
.status { display: flex; align-items: center; height: 48px; margin-left: auto; letter-spacing: -0.2px; }
.status svg { height: 32px; }
.ime { display: grid; place-items: center; width: 32px; height: 32px; margin-right: 38px; border-radius: 5px; background: #1b2128; color: #c5e2ff; font-size: 24px; letter-spacing: 0; line-height: 30px; }
.date { margin-right: 15px; padding-bottom: 3px; }
.time { padding-bottom: 1px; letter-spacing: 0; }

.window { position: relative; display: flex; flex-direction: column; width: 2880px; height: 1628px; margin-top: 2px; border-radius: 20px; overflow: hidden; background: #fff; box-shadow: 0 0 0 1.500px rgba(40, 80, 120, .6); }
.tabstrip { display: flex; align-items: flex-end; height: 84px; background: #dfe1e5; border-top: 1px solid #f3f3f5; box-sizing: border-box; }
.lights { display: flex; gap: 16px; width: 144px; height: 53px; padding-left: 42px; }
.lights i { width: 24px; height: 24px; border-radius: 50%; box-sizing: border-box; border: 1px solid rgba(0, 0, 0, .12); }
.red { background: #ed6a5f; }
.yellow { background: #f5bf4f; }
.green { background: #61c554; }
.tab { position: relative; display: flex; align-items: center; width: 306px; height: 68px; box-sizing: border-box; padding-left: 24px; font-size: 24px; color: #3c4043; }
.tab.divided::after { content: ""; position: absolute; right: -1px; top: 15px; width: 2px; height: 40px; background: #8e9196; }
.tab.active { background: #fff; border-radius: 16px 16px 0 0; }
.ear { position: absolute; bottom: 0; width: 16px; height: 16px; }
.ear.left { left: -16px; }
.ear.right { right: -16px; }
.favicon { width: 32px; height: 32px; }
.tab-title { width: 180px; margin-left: 16px; overflow: hidden; white-space: nowrap; letter-spacing: -0.3px; mask-image: linear-gradient(90deg, #000 72%, transparent 99%); }
.tab-title.ko { padding-bottom: 3px; letter-spacing: -1.400px; }
.tab-title.mixed { padding-bottom: 3px; letter-spacing: -0.3px; }
.close { width: 16px; height: 16px; margin-left: 16px; }
.plus { width: 24px; height: 24px; margin: 0 0 22px 34px; }
.search-tabs { width: 28px; height: 28px; margin: 0 30px 20px auto; }

.toolbar { display: flex; align-items: center; height: 72px; padding-left: 24px; }
.nav { width: 40px; height: 40px; margin-right: 24px; }
.omnibox { display: flex; align-items: center; width: 2192px; height: 56px; box-sizing: border-box; padding: 0 20px 0 24px; border-radius: 28px; background: #f1f3f4; font-size: 28px; color: #5f6368; }
.warn { width: 26px; height: 22px; }
.unsafe { margin-left: 18px; padding-right: 17px; border-right: 2px solid #9a9da1; line-height: 32px; font-size: 26px; letter-spacing: -0.7px; white-space: nowrap; }
.url { margin-left: 19px; color: #202124; letter-spacing: -0.1px; padding-bottom: 0; }
.url em { font-style: normal; color: #5f6368; }
.star { width: 34px; height: 34px; margin-left: auto; }
.extensions { display: flex; align-items: center; margin-left: 30px; }
.layers { position: relative; width: 32px; height: 32px; margin-right: 32px; }
.layers b { position: absolute; left: 20px; top: 20px; width: 24px; height: 24px; border-radius: 4px; background: #673ab7; color: #fff; font: 500 20px/24px Inter, sans-serif; text-align: center; }
.avatar { width: 44px; height: 44px; margin-right: 39px; border-radius: 50%; background: #8d6e63; color: #fff; font-size: 24px; line-height: 43px; text-align: center; }

.bookmarks { display: flex; align-items: center; height: 66px; padding: 0 0 9px 28px; box-sizing: border-box; border-bottom: 2px solid #dadce0; font-size: 24px; color: #3c4043; white-space: nowrap; }
.bookmark { display: flex; align-items: center; flex: none; letter-spacing: -0.25px; }
.bm-icon { display: flex; align-items: center; flex: none; }
.bookmarks .ko { padding-bottom: 2px; letter-spacing: -1px; }
.bookmarks .mixed { padding-bottom: 2px; letter-spacing: -0.5px; }
.wiki { font: 400 31px/28px "Liberation Serif", serif; color: #000; -webkit-text-stroke: .6px #000; }
.more { width: 35px; margin-left: 50px; font-size: 26px; line-height: 28px; }
.list-icon { margin: 0 18px 0 0; padding-left: 22px; border-left: 2px solid #ccc; }
.bookmarks .reading { letter-spacing: -1.300px; color: #202124; }

.viewport { display: flex; flex: 1; font-family: "Noto Sans CJK KR", sans-serif; white-space: nowrap; }
.page { display: flex; flex-direction: column; width: 2850px; background: #f5f5f5; }
.scroll { width: 28px; border-left: 2px solid #e8e8e8; background: #fafafa; }
.scroll i { display: block; width: 17px; height: 1126px; margin: 6px 0 0 5px; border-radius: 9px; background: #c1c1c1; }
.site-header { display: flex; justify-content: space-between; height: 190px; padding: 0 455px 0 495px; background: #fff; }
.logo { display: flex; flex-direction: column; width: 270px; }
.slogan { margin: 28px 0 0 2px; font-size: 41px; line-height: 44px; letter-spacing: -4.200px; word-spacing: 4px; color: #b3b3b3; }
.logo strong { margin-top: 6px; font-size: 69px; line-height: 72px; font-weight: 700; letter-spacing: 2.600px; color: #4c58e2; -webkit-text-stroke: 5px #4c58e2; stroke-linejoin: round; }
.header-right { display: flex; flex-direction: column; align-items: flex-end; }
.util { display: flex; gap: 20px; margin-top: 22px; font-size: 23px; line-height: 34px; letter-spacing: -1.300px; color: #a2a2a2; }
.site-nav { display: flex; align-items: center; width: 1085px; height: 50px; margin: 26px 0 0; font-size: 34px; letter-spacing: -2.700px; color: #222; }
.site-nav span { flex: none; }
.site-nav .on, aside p.on { color: #4c58e2; }
.site-body { display: flex; flex: 1; padding: 42px 0 0 444px; }
aside { width: 362px; }
aside h2 { margin: 8px 0 0; font-size: 42px; line-height: 48px; font-weight: 400; letter-spacing: -3.200px; color: #222; }
aside p { margin: 0; font-size: 30px; line-height: 44px; height: 88px; letter-spacing: -2.700px; word-spacing: 3px; color: #a5a5a5; }
aside p.on { height: 87px; margin-top: 53px; font-size: 32px; letter-spacing: -2.800px; }
section { width: 1600px; }
.heading { display: flex; align-items: center; height: 44px; }
.heading i { width: 12px; height: 44px; box-sizing: border-box; border: 2px solid #c0c0c0; background: #ccc; }
.heading h3 { margin: 0 0 4px 17px; width: 173px; font-size: 30px; line-height: 40px; font-weight: 400; letter-spacing: -2.800px; color: #333; }
.heading span { padding-bottom: 4px; font-size: 24px; font-weight: 300; letter-spacing: -2.600px; color: #777; }
.panel { display: flex; flex-direction: column; height: 296px; box-sizing: border-box; margin-top: 14px; padding: 0 20px; border: 2px solid #ccc; background: #fff; }
.panel h4 { margin: 49px 2px 0 0; font-size: 30px; line-height: 44px; font-weight: 400; letter-spacing: -2.300px; text-align: center; color: #333; }
.panel p { margin: 12px 0 0 38px; font-size: 23px; line-height: 36px; letter-spacing: -1.300px; color: #666; }
.field { display: flex; align-items: center; height: 104px; box-sizing: border-box; margin-top: 11px; padding-left: 474px; border: 2px dashed #777; background: #fcfcfc; }
.field label { width: 190px; padding-bottom: 4px; font-size: 28px; font-weight: 500; letter-spacing: -2.600px; word-spacing: 3px; color: #333; }
.field input { width: 334px; height: 58px; box-sizing: border-box; margin: 0 0 1px; border: 2px solid #d9d9d9; background: #fff; }
.actions { display: flex; gap: 22px; margin: 40px 0 0 560px; }
button { width: 228px; height: 62px; border: 0; padding: 0 0 4px; background: #a5a5a5; color: #fff; font: 500 26px/40px "Noto Sans CJK KR", sans-serif; letter-spacing: -.4px; }
.primary { background: #4c58e2; }
footer { display: flex; align-items: center; height: 78px; box-sizing: border-box; padding-left: 466px; border-top: 2px solid #c9c9c9; background: linear-gradient(90deg, rgba(242, 242, 242, .9), rgba(242, 242, 242, 0) 140px, rgba(242, 242, 242, 0) 2700px, rgba(242, 242, 242, .8)), linear-gradient(#eee, #e6e6e6 50%, #d2d2d2); color: #222; font-size: 25px; letter-spacing: -1.700px; }
.fav { width: 129px; padding-bottom: 5px; }
.chev { width: 10px; height: 24px; margin-bottom: 2px; }
.fav + .chev { margin-right: 27px; }
.fav-tab { display: flex; align-items: center; justify-content: space-between; width: 210px; height: 62px; box-sizing: border-box; margin-right: 6px; padding: 0 16px 0 18px; border: 2px solid #ccc; background: #626262; color: #fff; }
.fav-tab span { padding-bottom: 2px; }
.fav-tab i { padding-bottom: 7px; font-style: normal; font-weight: 300; font-size: 23px; letter-spacing: 0; }
.next { margin-left: 1082px; }

.dock { position: absolute; left: 75px; top: 1680px; display: flex; width: 2731px; height: 110px; box-sizing: border-box; padding-left: 3px; border: 2px solid rgba(160, 180, 200, .5); border-radius: 32px; background: linear-gradient(90deg, #596679, #586c82 25%, #5c788c 50%, #64797f 75%, #67808a); }
.defs { position: absolute; }
.slot { position: relative; display: flex; flex: none; flex-direction: column; align-items: center; width: 91px; }
.slot > svg { width: 84px; height: 84px; margin-top: 8px; filter: drop-shadow(0 1px 1px rgba(0, 0, 0, .35)); }
.slot.sep { width: 41px; }
.slot.sep::before { content: ""; width: 2px; height: 82px; margin-top: 12px; background: #34525f; }
.dot { width: 8px; height: 8px; margin-top: 4px; border-radius: 50%; background: #000; }
.badge { position: absolute; left: 57px; top: 6px; width: 34px; height: 34px; border-radius: 50%; background: #e25241; color: #fff; font: 400 21px/34px Inter, sans-serif; text-align: center; }
</style>
